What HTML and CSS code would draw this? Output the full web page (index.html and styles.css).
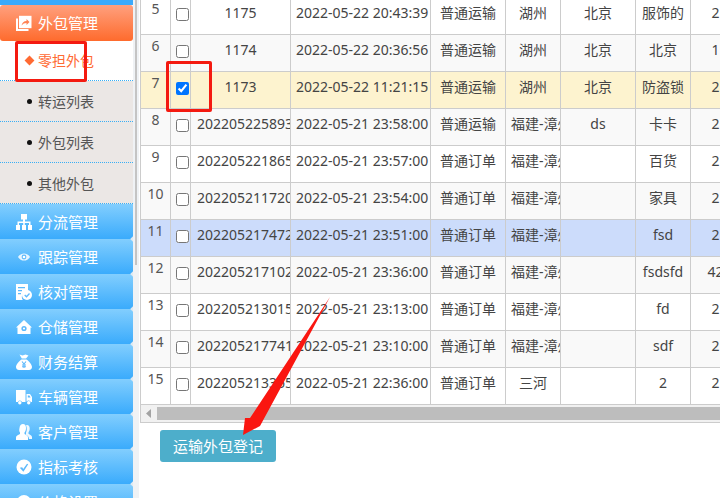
FILE: index.html
```html
<!DOCTYPE html>
<html lang="zh-CN">
<head>
<meta charset="utf-8">
<title>外包管理</title>
<link rel="stylesheet" href="styles.css">
</head>
<body>
<div class="app">
  <nav class="sidebar">
    <div class="nav-stub"></div>
    <div class="nav-head nav-active">
      <svg class="nav-icon" viewBox="0 0 16 16"><path fill="#fff" d="M3 .8h12.500v12.400H3z"/><path fill="#ff8254" d="M5.500 10.500c.5-3 2.400-4.500 5-4.600V4l3 3-3 3V8c-2 0-3.600.8-5 2.500z"/><path fill="#fff" d="M0 3.500h2v10.500h10.500v2H0z"/></svg>
      <span>外包管理</span>
    </div>
    <a class="sub sub-on"><i class="diamond"></i>零担外包</a>
    <a class="sub"><i class="dot"></i>转运列表</a>
    <a class="sub"><i class="dot"></i>外包列表</a>
    <a class="sub"><i class="dot"></i>其他外包</a>
    <div class="nav-head">
      <svg class="nav-icon" viewBox="0 0 16 16"><path fill="#fff" d="M5 0h6v5.500H9V7.500h5.500V11H16v5h-4v-5h1V9H8.800v2H10v5H6v-5h1.200V9H3v2h1v5H0v-5h1.500V7.500H7V5.500H5z"/></svg>
      <span>分流管理</span>
    </div>
    <div class="nav-head">
      <svg class="nav-icon" viewBox="0 0 16 16"><path fill="#fff" fill-opacity=".85" d="M2 8c1.500-2.500 3.600-3.600 6-3.600S12.500 5.500 14 8c-1.500 2.500-3.600 3.600-6 3.600S3.500 10.500 2 8z"/><circle cx="8" cy="8" r="2.400" fill="#5cb9fc"/><circle cx="8" cy="8" r="1.300" fill="#fff"/></svg>
      <span>跟踪管理</span>
    </div>
    <div class="nav-head">
      <svg class="nav-icon" viewBox="0 0 16 16"><path fill="#fff" d="M0 0h12v7.500A5.500 5.500 0 0 0 6.800 16H0z"/><path fill="#5cb9fc" d="M2 3h7v1.200H2zM2 6h4v1.200H2zM2 9h3v1.200H2z"/><circle cx="11" cy="11" r="5" fill="#fff"/><path fill="none" stroke="#5cb9fc" stroke-width="1.300" d="M8.700 11l1.800 1.800 3-3.300"/></svg>
      <span>核对管理</span>
    </div>
    <div class="nav-head">
      <svg class="nav-icon" viewBox="0 0 16 16"><path fill="#fff" d="M8 1l8 7.500h-1.500V15h-13V8.500H0z"/><circle cx="8" cy="9.500" r="2.600" fill="#5cb9fc"/><circle cx="8" cy="9.500" r="1.100" fill="#fff"/></svg>
      <span>仓储管理</span>
    </div>
    <div class="nav-head">
      <svg class="nav-icon" viewBox="0 0 16 16"><path fill="#fff" d="M3.500.500l3 1 3-1 3 1-2.500 3H5.800zM5.500 5.500h5C13.500 7.500 16 11 16 13c0 2-1.500 3-3 3H3c-1.500 0-3-1-3-3 0-2 2.500-5.500 5.500-7.500z"/><path fill="none" stroke="#5cb9fc" stroke-width="1.100" d="M6 7.500l2 2.500 2-2.500M8 10v4M6 11h4M6 12.800h4"/></svg>
      <span>财务结算</span>
    </div>
    <div class="nav-head">
      <svg class="nav-icon" viewBox="0 0 16 16"><path fill="#fff" d="M0 1h9.500v12H6a2.200 2.200 0 0 0-4.200 0H0zM10.500 5H14l2 3v5h-1.300a2.200 2.200 0 0 0-3.900-.5h-.3z"/><circle cx="3.800" cy="13.800" r="1.700" fill="#fff"/><circle cx="12.700" cy="13.800" r="1.700" fill="#fff"/><path fill="#5cb9fc" d="M11.800 6.500h1.600l1.200 2h-2.800z"/></svg>
      <span>车辆管理</span>
    </div>
    <div class="nav-head">
      <svg class="nav-icon" viewBox="0 0 16 16"><path fill="#fff" d="M7 0c2 0 3 1.500 3 4 0 2-.7 3.600-1.500 4.500V10c2 .8 3.500 1.800 3.500 3.500V16H0v-2.500C0 11.800 2 10.800 4 10V8.500C3.300 7.600 3 6 3.500 4 3.800 1.500 5 0 7 0z"/><path fill="#fff" d="M11 1c1.800 0 2.700 1.500 2.700 3.500 0 1.700-.5 3-1.200 3.800v1.400c1.500.8 3.500 1.800 3.500 3.300V15h-3c0-2-1.500-3.500-3-4.200V8.500c1-1.500 1.200-5 0-7.300z" opacity=".9"/></svg>
      <span>客户管理</span>
    </div>
    <div class="nav-head">
      <svg class="nav-icon" viewBox="0 0 16 16"><circle cx="8" cy="8" r="7.500" fill="#fff"/><path fill="#5cb9fc" d="M3.800 8.800l2.400-.6 1 1.700 3.800-5.200 1.200.6-4.800 7.400z"/></svg>
      <span>指标考核</span>
    </div>
    <div class="nav-head">
      <svg class="nav-icon" viewBox="0 0 16 16"><circle cx="8" cy="8" r="7" fill="#fff"/></svg>
      <span>价格设置</span>
    </div>
  </nav>
  <div class="rail"><div class="rail-thumb"></div></div>
  <main class="main">
    <div class="grid-wrap">
      <table class="grid">
        <colgroup>
          <col class="c-num"><col class="c-chk"><col class="c-id"><col class="c-time"><col class="c-type"><col class="c-from"><col class="c-to"><col class="c-goods"><col class="c-qty">
        </colgroup>
        <tbody>
          <tr><td class="num">5</td><td class="chk"><input type="checkbox"></td><td>1175</td><td>2022-05-22 20:43:39</td><td>普通运输</td><td>湖州</td><td>北京</td><td>服饰的</td><td>2</td></tr>
          <tr class="alt"><td class="num">6</td><td class="chk"><input type="checkbox"></td><td>1174</td><td>2022-05-22 20:36:56</td><td>普通运输</td><td>湖州</td><td>北京</td><td>北京</td><td>1</td></tr>
          <tr class="sel"><td class="num">7</td><td class="chk"><input type="checkbox" checked></td><td>1173</td><td>2022-05-22 11:21:15</td><td>普通运输</td><td>湖州</td><td>北京</td><td>防盗锁</td><td>2</td></tr>
          <tr class="alt"><td class="num">8</td><td class="chk"><input type="checkbox"></td><td class="lead">2022052258931</td><td>2022-05-21 23:58:00</td><td>普通运输</td><td class="lead city">福建-漳州</td><td>ds</td><td>卡卡</td><td>2</td></tr>
          <tr><td class="num">9</td><td class="chk"><input type="checkbox"></td><td class="lead">2022052218651</td><td>2022-05-21 23:57:00</td><td>普通订单</td><td class="lead city">福建-漳州</td><td></td><td>百货</td><td>2</td></tr>
          <tr class="alt"><td class="num">10</td><td class="chk"><input type="checkbox"></td><td class="lead">2022052117201</td><td>2022-05-21 23:54:00</td><td>普通订单</td><td class="lead city">福建-漳州</td><td></td><td>家具</td><td>2</td></tr>
          <tr class="hot"><td class="num">11</td><td class="chk"><input type="checkbox"></td><td class="lead">2022052174721</td><td>2022-05-21 23:51:00</td><td>普通订单</td><td class="lead city">福建-漳州</td><td></td><td>fsd</td><td>2</td></tr>
          <tr class="alt"><td class="num">12</td><td class="chk"><input type="checkbox"></td><td class="lead">2022052171021</td><td>2022-05-21 23:36:00</td><td>普通订单</td><td class="lead city">福建-漳州</td><td></td><td>fsdsfd</td><td>42</td></tr>
          <tr><td class="num">13</td><td class="chk"><input type="checkbox"></td><td class="lead">2022052130151</td><td>2022-05-21 23:13:00</td><td>普通订单</td><td class="lead city">福建-漳州</td><td></td><td>fd</td><td>2</td></tr>
          <tr class="alt"><td class="num">14</td><td class="chk"><input type="checkbox"></td><td class="lead">2022052177411</td><td>2022-05-21 23:10:00</td><td>普通订单</td><td class="lead city">福建-漳州</td><td></td><td>sdf</td><td>2</td></tr>
          <tr><td class="num">15</td><td class="chk"><input type="checkbox"></td><td class="lead">2022052133651</td><td>2022-05-21 22:36:00</td><td>普通订单</td><td>三河</td><td></td><td>2</td><td>2</td></tr>
        </tbody>
      </table>
      <div class="hscroll">
        <svg class="hscroll-arrow" viewBox="0 0 5 9"><path fill="#a3a3a3" d="M5 0v9L0 4.500z"/></svg>
        <div class="hscroll-thumb"></div>
      </div>
    </div>
    <button class="register" type="button">运输外包登记</button>
  </main>
</div>
<div class="mark mark-nav"></div>
<div class="mark mark-check"></div>
<svg class="pointer" viewBox="0 0 100 150"><path fill="#fa1610" d="M90 7 L20 136 L3 145 L5 128 L10 128 Z"/></svg>
</body>
</html>
```
FILE: styles.css
```css
* { box-sizing: border-box; }
html, body { margin: 0; height: 100%; }
body {
  width: 720px;
  height: 498px;
  overflow: hidden;
  background: #fff;
  color: #444;
  font: 14px/20px "Noto Sans CJK SC", "Noto Sans", sans-serif;
  position: relative;
}
.app { display: flex; height: 498px; overflow: hidden; }

.sidebar { flex: 0 0 133px; width: 133px; display: flex; flex-direction: column; overflow: hidden; height: 498px; }
.nav-stub { flex: 0 0 5px; background: #3aaafc; }
.nav-head {
  flex: 0 0 35px;
  height: 35px;
  display: flex;
  align-items: center;
  gap: 6px;
  padding-left: 16px;
  color: #fff;
  font-size: 15px;
  background: linear-gradient(#82cefe, #3aabfc);
  position: relative;
}
.nav-head::after {
  content: "";
  position: absolute;
  right: -2px;
  bottom: -2px;
  width: 4px;
  height: 4px;
  background: #dfe9f1;
  transform: rotate(45deg);
  z-index: 1;
}
.nav-active { flex-basis: 36px; height: 36px; background: linear-gradient(#ffa07e, #fe6b2d); border-radius: 3px; }
.nav-active::after { display: none; }
.nav-icon { flex: 0 0 16px; width: 16px; height: 16px; }
.sub {
  flex: 0 0 41px;
  height: 41px;
  display: flex;
  align-items: center;
  padding-left: 38px;
  background: #ebe7e5;
  border-bottom: 1px dotted #3aaff5;
  color: #555;
  position: relative;
}
.sub-on { flex-basis: 40px; height: 40px; background: #fff; color: #ff6a33; padding-bottom: 1px; }
.dot { position: absolute; left: 27px; top: 18px; width: 5px; height: 5px; border-radius: 50%; background: #111; }
.diamond { position: absolute; left: 26px; top: 16px; width: 7px; height: 7px; background: #ff6a33; transform: rotate(45deg); }

.rail { flex: 0 0 6px; background: #eff2f5; padding-left: 2px; }
.rail-thumb { width: 2px; height: 265px; background: #c4c4c4; }

.main { flex: 1 1 auto; min-width: 0; padding-left: 1px; }
.grid-wrap { width: 580px; margin-top: -3px; overflow: hidden; }
.grid { table-layout: fixed; border-collapse: collapse; width: 600px; }
.c-num { width: 30px; } .c-chk { width: 20px; } .c-id { width: 100px; } .c-time { width: 140px; }
.c-type { width: 75px; } .c-from { width: 55px; } .c-to { width: 75px; } .c-goods { width: 55px; } .c-qty { width: 50px; }
.grid td {
  height: 37px;
  padding: 0 5px 7px;
  border: 1px solid #ccc;
  text-align: center;
  white-space: nowrap;
  overflow: hidden;
  font-family: "Noto Sans", "Noto Sans CJK SC", sans-serif;
  font-size: 14px;
  line-height: 20px;
  vertical-align: middle;
}
.grid td.num { vertical-align: top; padding: 1px 0 0; color: #555; }
.grid td.chk { padding: 0 0 3px; }
.grid td.lead { text-align: left; padding-left: 6px; padding-right: 0; }
.grid td.city { padding-left: 5px; }
.grid input { display: block; width: 13px; height: 13px; margin: 0 0 0 5px; }
.alt td { background: #f9f9f9; }
.sel td { background: #fdf3cf; }
.hot td { background: #ccdcfb; }

.hscroll { display: flex; align-items: center; height: 18px; width: 580px; background: #f1f1f1; border-bottom: 1px solid #ccc; border-left: 1px solid #ccc; padding: 1px 0; }
.hscroll-arrow { width: 5px; height: 9px; margin-left: 5px; }
.hscroll-thumb { flex: 1; height: 13px; margin-left: 6px; background: #bdbdbd; }

.register {
  display: block;
  width: 116px;
  height: 32px;
  margin: 7px 0 0 20px;
  padding: 0;
  border: 0;
  border-radius: 3px;
  background: #4daecb;
  color: #fff;
  font: 15px/32px "Noto Sans CJK SC", "Noto Sans", sans-serif;
}

.mark { position: absolute; border: 3px solid #f41a10; border-radius: 2px; }
.mark-nav { left: 15px; top: 41px; width: 72px; height: 41px; }
.mark-check { left: 166px; top: 61px; width: 46px; height: 51px; }
.pointer { position: absolute; left: 240px; top: 290px; width: 100px; height: 150px; }
```
